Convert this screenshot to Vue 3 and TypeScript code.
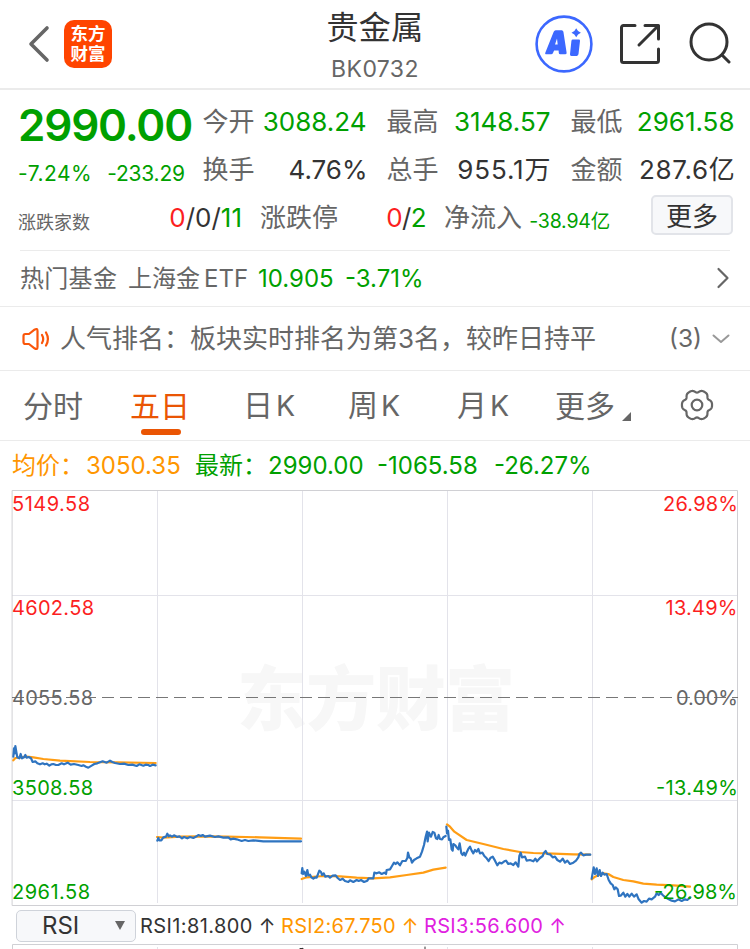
<script setup lang="ts">
interface Segment {
  ox: number
  oy: number
  kind: 'price' | 'average'
  data: string
}

const gridX: number[] = [157.5, 302.5, 447.5, 592.5]

// Samples are stored in thirds of a pixel, relative to each segment's origin.
const segments: Segment[] = [
  { ox: 0, oy: 720, kind: 'average', data: '40,121 46,114 80,110 100,112 130,117 180,122 270,126 350,127 467,129' },
  { ox: 0, oy: 720, kind: 'average', data: '471,351 490,353 540,350 600,349 680,350 780,352 903,356' },
  { ox: 290, oy: 800, kind: 'average', data: '35,237 50,232 100,228 150,229 200,233 250,235 300,232 350,225 400,218 430,209 467,203' },
  { ox: 290, oy: 800, kind: 'average', data: '471,73 480,80 493,95 530,120 580,132 640,147 690,156 730,159 790,161 850,163 900,164' },
  { ox: 500, oy: 800, kind: 'average', data: '275,238 285,230 310,220 325,222 340,231 370,240 400,244 430,251 470,254 520,256 570,260' },
  { ox: 0, oy: 720, kind: 'price', data: '40,110 42,85 44,100 46,78 49,96 52,112 58,115 62,102 66,115 72,112 76,105 80,113 86,111 93,115 98,126 106,124 112,130 120,133 128,130 134,133 140,131 148,137 154,133 160,132 168,135 175,135 185,130 192,133 203,128 212,134 222,132 235,135 245,138 250,136 258,140 265,143 275,137 283,132 292,130 300,127 308,124 320,128 330,122 337,126 345,129 360,132 372,131 385,135 397,134 410,138 418,133 430,137 437,134 445,135 450,138 458,134 467,136' },
  { ox: 0, oy: 720, kind: 'price', data: '472,362 475,354 478,361 484,361 490,352 498,350 502,341 506,349 510,346 516,350 522,346 532,351 538,349 546,355 552,351 562,355 570,351 580,354 590,349 595,345 603,348 608,345 615,350 630,347 645,351 655,349 670,353 685,352 692,358 700,356 710,358 725,363 735,360 745,363 760,361 790,364 903,364' },
  { ox: 290, oy: 800, kind: 'price', data: '35,220 37,204 39,222 43,215 48,228 52,210 55,226 60,224 64,232 70,236 75,232 80,233 88,212 93,216 96,225 101,220 106,230 115,228 120,233 128,227 137,226 143,234 150,240 158,236 165,243 175,246 180,241 190,246 200,240 206,243 213,240 222,246 232,242 236,235 250,235 253,218 260,220 268,217 275,222 283,218 288,222 290,210 300,208 306,198 312,188 317,192 322,187 330,196 337,183 347,183 352,174 354,158 358,172 362,175 366,188 372,180 380,175 390,170 396,155 402,135 407,110 411,95 413,124 417,98 423,110 428,96 433,98 438,115 442,117 446,105 450,117 456,118 460,112 467,108' },
  { ox: 290, oy: 800, kind: 'price', data: '469,80 471,100 474,92 477,120 481,118 485,148 488,152 490,132 496,136 500,142 505,148 509,130 514,160 518,165 522,158 526,167 531,155 536,145 540,140 545,152 550,160 555,150 560,155 565,147 570,160 577,158 583,168 590,175 596,183 602,173 608,170 615,182 622,196 628,188 635,190 643,184 648,182 655,192 662,190 670,195 677,187 685,200 688,168 692,158 696,172 705,170 710,182 720,180 730,184 736,176 741,184 750,174 758,168 762,158 767,153 772,162 780,163 788,172 795,170 802,180 810,185 818,176 825,188 832,182 840,192 850,188 858,182 865,172 868,162 873,158 880,166 888,164 901,164' },
  { ox: 500, oy: 800, kind: 'price', data: '275,236 281,202 285,222 290,205 294,228 299,210 303,228 308,218 313,224 320,222 326,240 332,250 338,255 343,268 347,262 353,268 357,288 362,287 370,278 376,290 382,282 388,290 395,281 402,290 410,283 416,298 425,308 432,303 440,305 447,296 455,298 465,290 470,280 476,285 482,278 488,285 496,292 505,297 515,302 525,304 535,298 545,303 555,298 562,300 571,292' },
]

function toPoints(s: Segment): string {
  return s.data
    .split(' ')
    .map((pair) => {
      const [x, y] = pair.split(',').map(Number)
      return `${(s.ox + x / 3).toFixed(2)},${(s.oy + y / 3).toFixed(2)}`
    })
    .join(' ')
}

// Six blunt teeth around the settings icon.
const gearPoints: string = Array.from({ length: 120 }, (_, i) => {
  const a = (i * Math.PI) / 60
  const r = 14.1 + 1.3 * Math.cos(6 * a) - 0.35 * Math.cos(12 * a)
  return `${(17 + r * Math.cos(a)).toFixed(2)},${(16 + r * Math.sin(a)).toFixed(2)}`
}).join(' ')
</script>

<template>
  <div class="page">
    <header class="head">
      <svg class="back" viewBox="0 0 22 38" width="22" height="38"><path d="M19 3 3 19l16 16" /></svg>
      <div class="logo">东方<br />财富</div>
      <div class="title">
        <h1>贵金属</h1>
        <p>BK0732</p>
      </div>
      <svg class="ai" viewBox="0 0 58 58" width="58" height="58">
        <circle cx="29" cy="29" r="27.4" />
        <path class="fill" fill-rule="evenodd" d="M19 15.200h9.200q1.400 0 1.700 1.500l3.200 20.700q.3 1.900-1.500 1.900h-4.800q-1.400 0-1.500-1.400l-.2-2.500h-4.500l-1.100 2.700q-.5 1.200-1.900 1.200h-4.500q-2 0-1.200-1.900l8.300-20.700q.6-1.500 2-1.500zM23.500 23.500l-2 6h2.700z" transform="translate(-1.500 0)" />
        <path class="fill" d="M37.800 24.500h6q1.400 0 1.200 1.400l-1.500 13.200q-.2 1.800-1.700 1.800h-5.400q-1.600 0-1.400-1.600l1.400-13.400q.2-1.400 1.400-1.400zM41.200 13.200q1.300 3.200 4.700 4.500-3.400 1.300-4.700 4.500-1.300-3.200-4.700-4.500 3.400-1.300 4.700-4.500z" />
      </svg>
      <svg class="share" viewBox="0 0 42 42" width="42" height="42">
        <path d="M16 2.500H4.500a2 2 0 0 0-2 2v33a2 2 0 0 0 2 2h33a2 2 0 0 0 2-2V26M26 2.500h13.500V16M39 3 20 22" />
      </svg>
      <svg class="search" viewBox="0 0 42 42" width="42" height="42">
        <circle cx="20" cy="20" r="18" /><path d="m33 33 7 7" />
      </svg>
    </header>

    <section class="quote">
      <div class="main">
        <strong>2990.00</strong>
        <div class="chg"><span>-7.24%</span><span>-233.29</span></div>
      </div>
      <div class="cells">
        <div class="cell"><label>今开</label><b class="g">3088.24</b></div>
        <div class="cell"><label>最高</label><b class="g">3148.57</b></div>
        <div class="cell"><label>最低</label><b class="g">2961.58</b></div>
        <div class="cell"><label>换手</label><b class="pct">4.76%</b></div>
        <div class="cell"><label>总手</label><b class="wide">955.1万</b></div>
        <div class="cell"><label>金额</label><b class="wide2">287.6亿</b></div>
      </div>
    </section>
    <section class="stats">
      <div class="stat s1"><label class="small">涨跌家数</label><b><i class="r">0</i>/0/<i class="g">11</i></b></div>
      <div class="stat s2"><label>涨跌停</label><b class="tight"><i class="r">0</i>/<i class="g">2</i></b></div>
      <div class="stat s3"><label>净流入</label><b class="g flow">-38.94亿</b></div>
      <button class="more">更多</button>
    </section>

    <section class="fund">
      <span class="f1">热门基金</span><span class="f2">上海金<em>ETF</em></span><span class="f3 g">10.905</span><span class="f4 g">-3.71%</span>
      <svg viewBox="0 0 14 22" width="14" height="22"><path d="m2.500 2 9 9-9 9" /></svg>
    </section>

    <section class="rank">
      <svg class="horn" viewBox="0 0 28 24" width="28" height="24">
        <path d="M1.500 9q0-2 1.800-2H7l5.500-4.300Q15.500.8 15.500 4v16q0 3.200-3 1.300L7 17H3.300q-1.800 0-1.800-2zM20 8q2.400 4 0 8M24 5.500q3.800 6.500 0 13" />
      </svg>
      <span class="r1">人气排名：</span><span class="r2">板块实时排名为第3名，较昨日持平</span>
      <span class="count">(3)</span>
      <svg class="down" viewBox="0 0 18 10" width="18" height="10"><path d="m1.500 1.500 7.500 6.500 7.500-6.500" /></svg>
    </section>

    <nav class="tabs">
      <span class="t1">分时</span>
      <span class="t2 on">五日</span>
      <span class="t3">日<em>K</em></span>
      <span class="t4">周<em>K</em></span>
      <span class="t5">月<em>K</em></span>
      <span class="t6">更多</span>
      <svg class="corner" viewBox="0 0 9 9" width="9" height="9"><path d="M9 0v9H0z" /></svg>
      <svg class="gear" viewBox="0 0 34 32" width="34" height="32">
        <polygon :points="gearPoints" />
        <circle cx="17" cy="16" r="5.300" />
      </svg>
    </nav>

    <section class="avg">
      <span class="o a1">均价：</span><span class="o a2">3050.35</span>
      <span class="g a3">最新：</span><span class="g a4">2990.00</span><span class="g a5">-1065.58</span><span class="g a6">-26.27%</span>
    </section>

    <svg class="chart" viewBox="0 490 750 417" width="750" height="417">
      <text class="mark" x="237" y="725" textLength="278">东方财富</text>
      <path class="grid" d="M12 595.500H738M12 800.500H738" />
      <path v-for="x in gridX" :key="x" class="grid" :d="`M${x} 490V903`" />
      <rect class="frame" x="12.500" y="490.500" width="725" height="415" />
      <path class="zero" d="M12 697.500H738" />
      <polyline v-for="(s, i) in segments" :key="i" :class="s.kind" :points="toPoints(s)" />
      <text class="lab red" x="12" y="510.500" textLength="78">5149.58</text>
      <text class="lab red" x="12" y="614.500" textLength="82">4602.58</text>
      <text class="lab gray" x="12" y="704.500" textLength="81">4055.58</text>
      <text class="lab green" x="12" y="794.500" textLength="81">3508.58</text>
      <text class="lab green" x="12" y="898.500" textLength="78">2961.58</text>
      <text class="lab red" x="663" y="510.500" textLength="75">26.98%</text>
      <text class="lab red" x="665.500" y="614.500" textLength="72">13.49%</text>
      <text class="lab gray" x="676" y="704.500" textLength="62">0.00%</text>
      <text class="lab green" x="656" y="794.500" textLength="82">-13.49%</text>
      <text class="lab green" x="654" y="898.500" textLength="83">-26.98%</text>
    </svg>

    <section class="rsi">
      <div class="pick"><span>RSI</span><svg viewBox="0 0 10 9" width="10" height="9"><path d="M0 0h10L5 9z" /></svg></div>
      <span class="i1">RSI1:81.800 ↑</span><span class="i2">RSI2:67.750 ↑</span><span class="i3">RSI3:56.600 ↑</span>
    </section>
    <svg class="next" viewBox="0 944 750 5" width="750" height="5">
      <path class="edge" d="M12.500 949V944.500H737.500V949" />
      <path v-for="x in gridX" :key="x" class="grid" :d="`M${x} 947V949`" />
      <path class="ink" d="M300 948.500h3M425 947v2" />
    </svg>
  </div>
</template>

<style>
body { background: #fff; overflow: hidden; }
</style>

<style scoped>
.page {
  width: 750px; height: 949px; overflow: hidden; display: flex; flex-direction: column;
  background: #fff; color: #333; font-family: "Inter", "Noto Sans CJK SC", sans-serif;
  font-size: 26px; line-height: 1; white-space: nowrap;
}
.page > * { flex: none; box-sizing: border-box; }
svg { display: block; flex: none; fill: none; stroke-linecap: round; stroke-linejoin: round; }
b, i, em { font-weight: 400; font-style: normal; }
.g { color: #00a000; }
.r { color: #fc1f1f; }
.o { color: #ff9600; }

.head { height: 90px; border-bottom: 2px solid #ebebeb; display: flex; align-items: flex-start; padding-left: 28px; }
.back { margin-top: 25px; stroke: #666; stroke-width: 3.600; }
.logo {
  box-sizing: border-box; width: 48px; height: 48px; margin: 20px 0 0 14px; padding-top: 3px; border-radius: 10px;
  background: #ff4400; color: #fff; text-align: center; font: 700 17.500px/20px "Noto Sans CJK SC", sans-serif;
}
.title { width: 180px; margin: 10px 0 0 173px; text-align: center; }
.title h1 { margin: 0; font-size: 32px; line-height: 36px; font-weight: 400; color: #333; letter-spacing: .3px; }
.title p { margin: 11px 0 0; font-size: 23px; line-height: 24px; color: #666; letter-spacing: .4px; }
.ai { margin: 15px 0 0 70px; stroke: #3c68ff; stroke-width: 2.600; }
.ai .fill { fill: #3c68ff; stroke: none; }
.share { margin: 23px 0 0 26px; stroke: #333; stroke-width: 3; }
.search { margin: 22px 0 0 28px; stroke: #333; stroke-width: 3; }

.quote { height: 104px; display: flex; padding: 9px 15px 0 18px; }
.main { width: 185px; }
.main strong { display: block; margin-top: 2px; font-size: 44px; line-height: 48px; font-weight: 600; color: #00a000; letter-spacing: -1.200px; }
.chg { display: flex; gap: 15px; margin-top: 13px; font-size: 21px; line-height: 24px; color: #00a000; }
.chg span:first-child { letter-spacing: .5px; }
.chg span:last-child { letter-spacing: -.2px; }
.cells { flex: 1; display: grid; grid-template-columns: repeat(3, 164px); column-gap: 20px; grid-auto-rows: 48px; margin-left: -.5px; }
.cell { display: flex; justify-content: space-between; align-items: center; height: 46px; }
label { color: #666; }
.cell .pct { margin-right: -1px; }
.cell .wide { letter-spacing: .9px; margin-right: -1px; }
.cell .wide2 { letter-spacing: .7px; margin-right: -1px; }
.stats { height: 56px; display: flex; padding: 1px 17px 0 18px; }
.stat { display: flex; align-items: center; justify-content: space-between; height: 45px; padding-top: 1px; box-sizing: border-box; }
.s1 { width: 224px; } .s2 { width: 166px; margin-left: 18px; } .s3 { width: 166px; margin-left: 18px; }
.tight { letter-spacing: -.6px; }
.small { font-size: 18px; padding-top: 9px; }
.flow { font-size: 19.500px; padding-top: 8px; letter-spacing: -.2px; }
.more {
  box-sizing: border-box; width: 82px; height: 40px; margin: 0 0 0 auto; padding: 0; border: 2px solid #e2e4e9; border-radius: 5px;
  background: #f7f8fa; color: #333; font: 26px/34px "Noto Sans CJK SC", sans-serif;
}

.fund { height: 56px; margin: 0 20px; padding-top: 1px; border-top: 1px solid #ebebeb; display: flex; align-items: center; font-size: 24px; color: #666; }
.fund em { margin-left: 4px; }
.f1 { width: 108px; letter-spacing: .3px; } .f2 { width: 130px; } .f3 { width: 87px; }
.fund svg { margin: -3px 0 0 auto; stroke: #666; stroke-width: 2.200; }

.rank { height: 65px; border-top: 1px solid #ebebeb; border-bottom: 1px solid #ebebeb; display: flex; align-items: center; padding: 0 20px 0 22px; color: #666; }
.horn { stroke: #fa560a; stroke-width: 2.200; }
.r1 { margin-left: 10px; width: 130px; }
.count { margin-left: auto; font-size: 24.500px; }
.down { margin-left: 10px; stroke: #999; stroke-width: 2; }

.tabs { height: 70px; border-bottom: 1px solid #ebebeb; display: flex; align-items: center; padding-left: 23px; font-size: 30px; color: #666; }
.tabs em { margin-left: 3px; font-size: 28.500px; }
.t1 { width: 107px; } .t2 { width: 113px; } .t3 { width: 105px; } .t4 { width: 109px; } .t5 { width: 98px; } .t6 { width: 67px; }
.on { color: #ea5504; height: 70px; line-height: 70px; position: relative; }
.on::after { content: ""; position: absolute; left: 11px; bottom: 6px; width: 40px; height: 6px; border-radius: 3px; background: #ea5504; }
.corner { margin-top: 21px; fill: #666; }
.gear { margin: -1px 0 0 49px; stroke: #666; stroke-width: 2.200; }

.avg { height: 49px; padding-top: 1px; display: flex; align-items: center; padding-left: 12px; font-size: 24px; }
.a1 { width: 74px; } .a2 { width: 109px; } .a3 { width: 73px; } .a4 { width: 109px; } .a5 { width: 117px; }

.grid { stroke: #e3e3ea; stroke-width: 1; stroke-linecap: butt; }
.frame { stroke: #d0d0d4; }
.zero { stroke: #777; stroke-width: 1.200; stroke-dasharray: 12 6; stroke-linecap: butt; }
.mark { font: 900 70px "Noto Sans CJK SC", sans-serif; fill: #f7f7f7; }
.average { stroke: #ff9d14; stroke-width: 2.200; }
.price { stroke: #2f74c0; stroke-width: 2.200; }
.lab { font-size: 20px; }
.red { fill: #fc1f1f; } .green { fill: #00a000; } .gray { fill: #666; }

.rsi { height: 37px; display: flex; align-items: center; padding-left: 16px; font-size: 20px; }
.pick {
  box-sizing: border-box; width: 120px; height: 32px; border: 1px solid #cfd3da; border-radius: 5px; background: #f7f8fa;
  display: flex; align-items: center; justify-content: space-between; padding: 0 10px 0 25px; font-size: 24px; color: #333;
}
.pick svg { fill: #666; }
.i1 { margin-left: 4px; width: 141px; letter-spacing: .4px; } .i2 { width: 143px; color: #ff9600; letter-spacing: .3px; } .i3 { color: #e020e0; letter-spacing: .3px; }
.edge { stroke: #d0d0d4; }
.ink { stroke: #333; stroke-width: 1; }
</style>
